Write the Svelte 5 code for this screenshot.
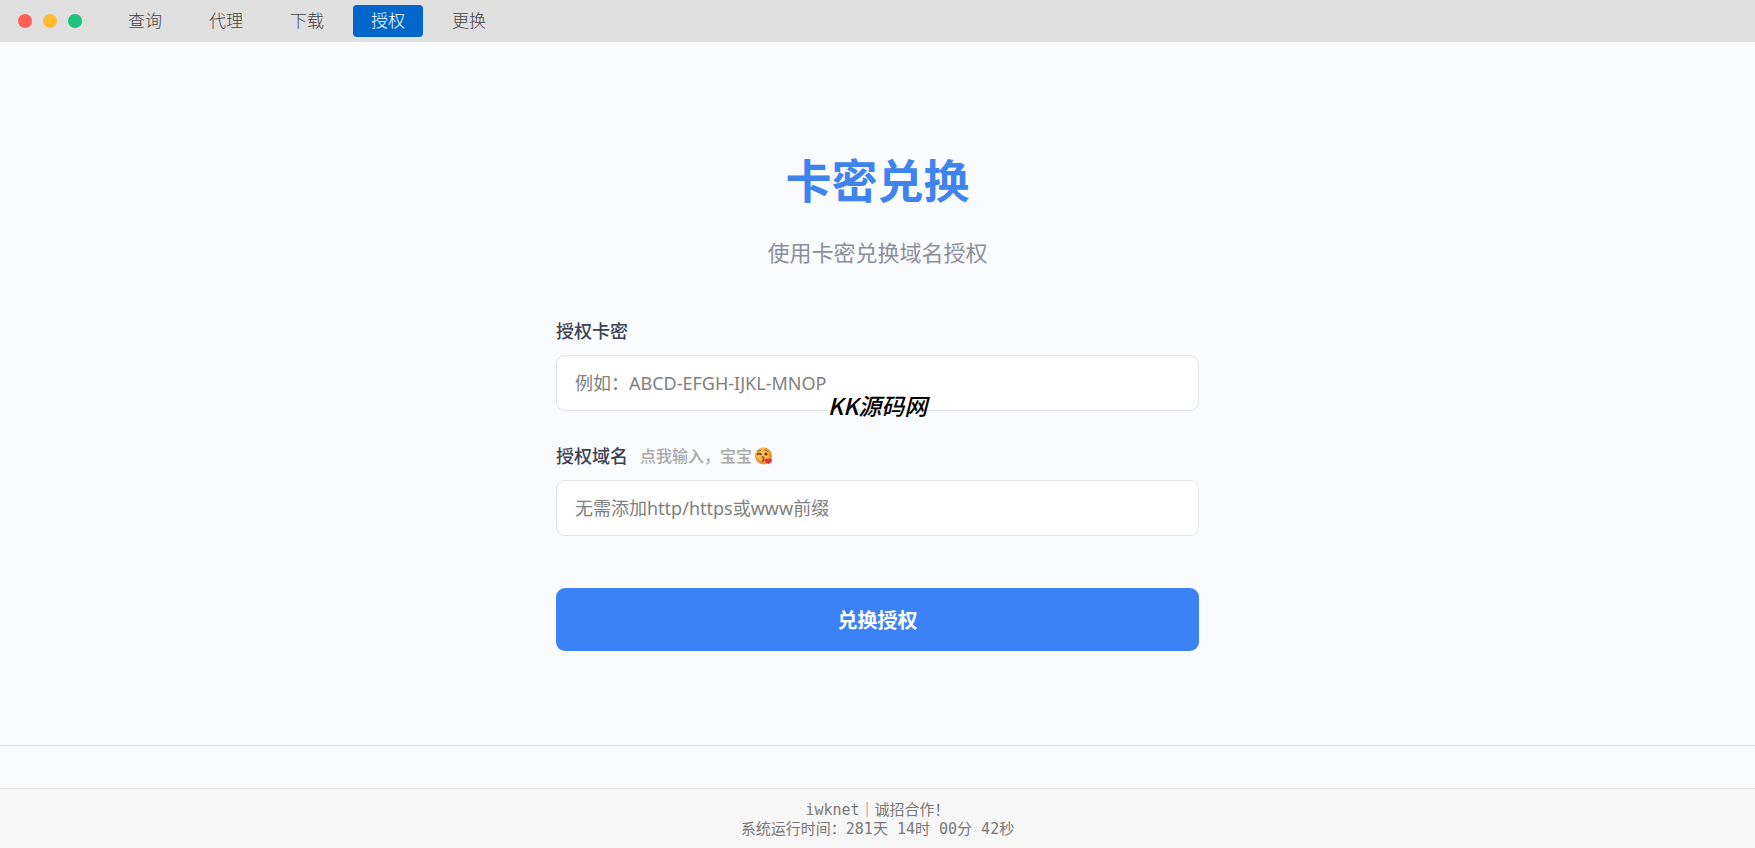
<script lang="ts">
  const tabs = ['查询', '代理', '下载', '授权', '更换']

  let active = $state('授权')
  let cardKey = $state('')
  let domain = $state('')
  let domainInput: HTMLInputElement

  function onSubmit(e: Event) {
    e.preventDefault()
  }
</script>

<div class="page">
  <header>
    <div class="dots">
      <span class="dot red"></span>
      <span class="dot yellow"></span>
      <span class="dot green"></span>
    </div>
    <nav>
      {#each tabs as tab}
        <button type="button" class="tab" class:active={tab === active} onclick={() => (active = tab)}>{tab}</button>
      {/each}
    </nav>
  </header>

  <main>
    <h1>卡密兑换</h1>
    <p class="subtitle">使用卡密兑换域名授权</p>

    <form onsubmit={onSubmit}>
      <div class="field">
        <label for="card-key">授权卡密</label>
        <div class="control">
          <input id="card-key" type="text" placeholder="例如：ABCD-EFGH-IJKL-MNOP" bind:value={cardKey} />
          <span class="mark">KK源码网</span>
        </div>
      </div>

      <div class="field">
        <div class="label-row">
          <label for="domain">授权域名</label>
          <button type="button" class="hint" onclick={() => domainInput.focus()}>
            点我输入，宝宝
            <svg viewBox="0 0 36 36" aria-hidden="true">
              <circle cx="17" cy="18" r="17" fill="#ee9434" />
              <circle cx="15" cy="15" r="13" fill="#fcc04d" />
              <path d="M5 10c1-2 3-3 6-3M19 6c3 0 5 1 6 3" fill="none" stroke="#8a4a18" stroke-width="2" stroke-linecap="round" />
              <path d="M5 15c2-3 5-3 7 0" fill="none" stroke="#6b3514" stroke-width="3" stroke-linecap="round" />
              <circle cx="22" cy="14" r="3" fill="#6b3514" />
              <path d="M14 20c5-1 5 3 1 4c4 0 4 4-1 4" fill="none" stroke="#96401a" stroke-width="2.5" stroke-linecap="round" />
              <path d="M27 34c-6-3-8-6-7-9s5-3 6 0c2-3 8-3 8 1s-3 6-7 8z" fill="#e0304a" />
            </svg>
          </button>
        </div>
        <div class="control">
          <input id="domain" type="text" placeholder="无需添加http/https或www前缀" bind:value={domain} bind:this={domainInput} />
        </div>
      </div>

      <button type="submit" class="submit">兑换授权</button>
    </form>
  </main>

  <footer>
    <div>iwknet｜诚招合作！</div>
    <div>系统运行时间：281天 14时 00分 42秒</div>
  </footer>
</div>

<style>
:global(body) {
  margin: 0;
  background: #fafbfd;
}

.page {
  display: flex;
  flex-direction: column;
  min-height: 100vh;
  font-family: "Noto Sans", "Noto Sans CJK SC", sans-serif;
}

button {
  font-family: inherit;
  border: none;
  cursor: pointer;
}

header {
  display: flex;
  align-items: center;
  gap: 28px;
  height: 42px;
  padding: 0 18px;
  background: #e0e0e0;
}

.dots {
  display: flex;
  gap: 11px;
}

.dot {
  width: 14px;
  height: 14px;
  border-radius: 50%;
}

.red { background: #ff5f57; }
.yellow { background: #febc2e; }
.green { background: #1fc27c; }

nav {
  display: flex;
  gap: 11px;
}

.tab {
  height: 32px;
  padding: 0 18px;
  border-radius: 4px;
  background: none;
  color: #444;
  font-size: 17px;
  font-weight: 300;
  line-height: 30px;
}

.tab.active {
  background: #0066cc;
  color: #fff;
}

main {
  flex: 1;
  display: flex;
  flex-direction: column;
  align-items: center;
  box-sizing: border-box;
  margin-bottom: 42px;
  padding: 106px 20px 94px;
  border-bottom: 1px solid #d8d9dc;
}

h1 {
  margin: 0;
  color: #3f83ec;
  font-size: 46px;
  font-weight: 700;
  line-height: 64px;
}

.subtitle {
  margin: 24px 0 50px;
  color: #8b8f99;
  font-size: 22px;
  line-height: 32px;
}

form {
  display: flex;
  flex-direction: column;
  width: 100%;
  max-width: 643px;
}

.field {
  display: flex;
  flex-direction: column;
  gap: 11px;
  margin-bottom: 32px;
}

label {
  color: #3b4256;
  font-size: 18px;
  font-weight: 500;
  line-height: 26px;
}

.label-row {
  display: flex;
  align-items: center;
  gap: 12px;
}

.hint {
  display: flex;
  align-items: center;
  gap: 3px;
  padding: 0;
  background: none;
  color: #a9a9a9;
  font-size: 16px;
  font-weight: 500;
  line-height: 26px;
}

.hint svg {
  width: 18px;
  height: 18px;
}

.control {
  position: relative;
}

input {
  display: block;
  box-sizing: border-box;
  width: 100%;
  height: 56px;
  padding: 0 18px;
  border: 1px solid #e2e3e6;
  border-radius: 9px;
  background: #fff;
  color: #333;
  font-family: inherit;
  font-size: 18px;
}

input::placeholder {
  color: #808080;
  opacity: 1;
}

.mark {
  position: absolute;
  bottom: -10px;
  left: 50%;
  transform: translateX(-50%);
  color: #000;
  font-family: "Noto Sans CJK SC", sans-serif;
  font-size: 23px;
  font-style: italic;
  font-weight: 500;
  line-height: 32px;
  white-space: nowrap;
  pointer-events: none;
}

.submit {
  height: 63px;
  margin-top: 20px;
  border-radius: 9px;
  background: #3b82f6;
  color: #fff;
  font-size: 20px;
  font-weight: 700;
}

footer {
  padding: 12px 0 9px;
  border-top: 1px solid #e8e8e8;
  background: #f7f7f7;
  color: #777;
  font-family: "DejaVu Sans Mono", "Noto Sans CJK SC", monospace;
  font-size: 15px;
  line-height: 19px;
  text-align: center;
}
</style>
